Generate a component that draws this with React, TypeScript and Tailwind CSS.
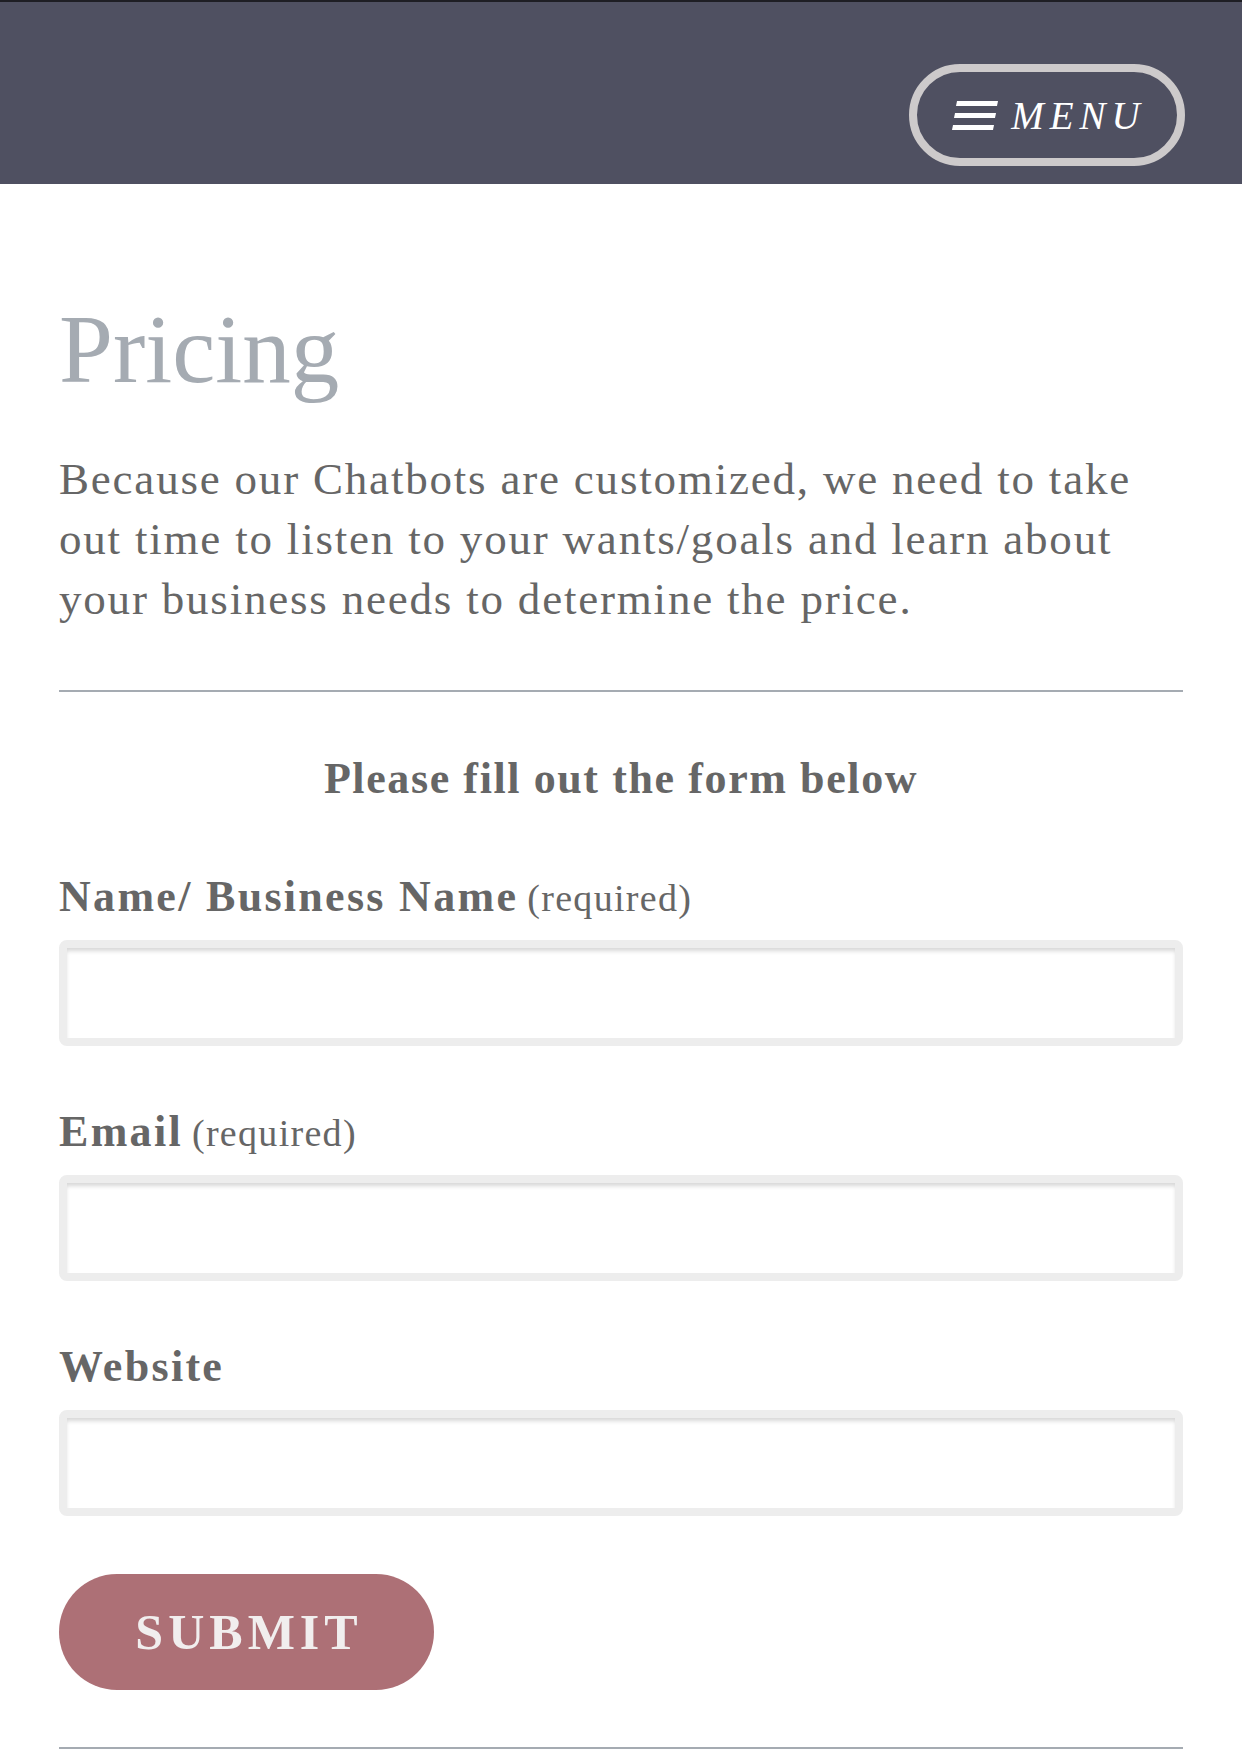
import React from 'react';

const serif = "font-['Liberation_Serif','Times_New_Roman',serif]";

function Hamburger() {
  return (
    <svg width="46" height="29" viewBox="0 0 46 29" className="shrink-0">
      <polygon points="5,0 46,0 45,5 4,5" fill="#ffffff" />
      <polygon points="3,12 44,12 43,17 2,17" fill="#ffffff" />
      <polygon points="1,24 42,24 41,29 0,29" fill="#ffffff" />
    </svg>
  );
}

function Field({ label, required }: { label: string; required?: boolean }) {
  return (
    <div className="flex flex-col">
      <label className="mb-[18px] h-[50px] leading-[50px] text-[#666666]">
        <span className="text-[44px] font-bold tracking-[2.3px]">{label}</span>
        {required && <span className="ml-[9px] text-[38px] tracking-[1.3px]">(required)</span>}
      </label>
      <input
        type="text"
        className="h-[106px] w-full rounded-[8px] border-[8px] border-[#ededed] bg-white shadow-[inset_0_4px_4px_-1px_rgba(0,0,0,0.16)] outline-none"
      />
    </div>
  );
}

export default function App() {
  return (
    <div className={`min-h-[1750px] w-[1242px] bg-white ${serif}`}>
      <header className="flex h-[184px] justify-end border-t-2 border-[#1e1e24] bg-[#4f5061] pr-[57px] pt-[62px]">
        <button className="flex h-[102px] w-[276px] items-center justify-center gap-[13px] rounded-full border-[8px] border-[#cdcacb] pl-[4px]">
          <Hamburger />
          <span className="text-[39px] italic leading-none tracking-[6px] text-white">MENU</span>
        </button>
      </header>

      <main className="px-[59px]">
        <h1 className="mt-[108px] text-[97px] leading-[1.2] text-[#a5abb2]">Pricing</h1>

        <p className="mt-[41px] text-[45px] leading-[60px] tracking-[1.8px] text-[#666666]">
          <span className="block whitespace-nowrap">Because our Chatbots are customized, we need to take</span>
          <span className="block whitespace-nowrap">out time to listen to your wants/goals and learn about</span>
          <span className="block whitespace-nowrap">your business needs to determine the price.</span>
        </p>

        <hr className="mt-[61px] border-t-2 border-[#a5abb2]" />

        <h3 className="mt-[62px] text-center text-[44px] font-bold leading-[50px] tracking-[1.6px] text-[#666666]">
          Please fill out the form below
        </h3>

        <form className="mt-[68px] flex flex-col gap-[61px]">
          <Field label="Name/ Business Name" required />
          <Field label="Email" required />
          <Field label="Website" />
        </form>

        <button className="mt-[58px] flex h-[116px] w-[375px] items-center justify-center rounded-full bg-[#ad7076] pl-[5px] text-[50px] font-bold tracking-[5px] text-[#f1eeee]">
          SUBMIT
        </button>

        <hr className="mt-[57px] border-t-2 border-[#a5abb2]" />
      </main>
    </div>
  );
}
